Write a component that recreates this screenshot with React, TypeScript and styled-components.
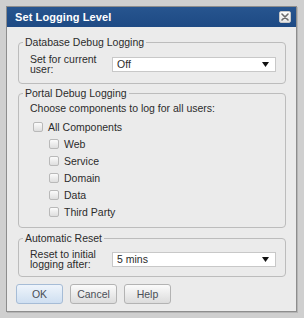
import React from 'react';
import styled, { createGlobalStyle } from 'styled-components';

const GlobalStyle = createGlobalStyle`
	html, body {
		margin: 0;
		padding: 0;
		background: #cfcfcf;
	}

	body {
		font-family: 'Liberation Sans', Arial, sans-serif;
		font-size: 10.5px;
		color: #2b2b2b;
	}
`;

const components = ['Web', 'Service', 'Domain', 'Data', 'Third Party'];

const Arrow = (): React.FunctionComponentElement<JSX.Element> => (
	<svg width='7' height='5' viewBox='0 0 7 5'>
		<path d='M0 0 L7 0 L3.5 5 Z' fill='#111' />
	</svg>
);

const CloseIcon = (): React.FunctionComponentElement<JSX.Element> => (
	<svg width='8' height='8' viewBox='0 0 8 8'>
		<path d='M1 1 L7 7 M7 1 L1 7' stroke='#6d6d6d' strokeWidth='1.6' strokeLinecap='round' />
	</svg>
);

const App = (): React.FunctionComponentElement<JSX.Element> => {
	return (
		<>
			<GlobalStyle />
			<Screen>
				<Window>
					<TitleBar>
						<h1>Set Logging Level</h1>
						<CloseButton>
							<CloseIcon />
						</CloseButton>
					</TitleBar>
					<Body>
						<Group $gap={0}>
							<legend>Database Debug Logging</legend>
							<GroupContent $top={6} $bottom={9}>
								<FieldRow>
									<FieldLabel>Set for current user:</FieldLabel>
									<Select>
										<span>Off</span>
										<Arrow />
									</Select>
								</FieldRow>
							</GroupContent>
						</Group>
						<Group $gap={3}>
							<legend>Portal Debug Logging</legend>
							<GroupContent $top={3} $bottom={7}>
								<Intro>Choose components to log for all users:</Intro>
								<CheckList>
									<CheckRow $indent={3}>
										<Box />
										<span>All Components</span>
									</CheckRow>
									{components.map((c) => (
										<CheckRow key={c} $indent={19}>
											<Box />
											<span>{c}</span>
										</CheckRow>
									))}
								</CheckList>
							</GroupContent>
						</Group>
						<Group $gap={4}>
							<legend>Automatic Reset</legend>
							<GroupContent $top={5} $bottom={7}>
								<FieldRow>
									<FieldLabel>Reset to initial logging after:</FieldLabel>
									<Select>
										<span>5 mins</span>
										<Arrow />
									</Select>
								</FieldRow>
							</GroupContent>
						</Group>
						<Buttons>
							<Button $primary>OK</Button>
							<Button>Cancel</Button>
							<Button>Help</Button>
						</Buttons>
					</Body>
				</Window>
			</Screen>
		</>
	);
};

const Screen = styled.div`
	width: 304px;
	height: 318px;
	padding: 6px 0 0 6px;
	box-sizing: border-box;
	overflow: hidden;
`;

const Window = styled.div`
	width: 291px;
	height: 306px;
	box-sizing: border-box;
	border: 1px solid #8d8d8d;
	background: #ebebeb;
	box-shadow: 1px 1px 0 #b5b5b5;
	display: flex;
	flex-direction: column;
`;

const TitleBar = styled.div`
	height: 20px;
	flex: none;
	background: linear-gradient(180deg, #27558f 0%, #1e4a84 100%);
	display: flex;
	align-items: center;
	justify-content: space-between;
	padding: 0 5px 0 8px;

	h1 {
		margin: 0;
		font-family: 'Liberation Sans', Arial, sans-serif;
		font-size: 11px;
		font-weight: 700;
		color: #ffffff;
		letter-spacing: 0.1px;
	}
`;

const CloseButton = styled.div`
	width: 12px;
	height: 12px;
	box-sizing: border-box;
	background: linear-gradient(180deg, #ffffff 0%, #e6e6e6 100%);
	border: 1px solid #c9c9c9;
	border-radius: 2px;
	display: flex;
	align-items: center;
	justify-content: center;
`;

const Body = styled.div`
	padding: 9px 10px 0 11px;
	display: flex;
	flex-direction: column;
`;

const Group = styled.fieldset<{ $gap: number }>`
	margin: ${(p) => p.$gap}px 0 0;
	padding: 0;
	border: 1px solid #bcbcbc;
	border-radius: 4px;
	min-width: 0;

	legend {
		margin-left: 4px;
		padding: 0 2px;
		line-height: 12px;
		font-size: 10.5px;
		color: #2b2b2b;
	}
`;

const GroupContent = styled.div<{ $top: number; $bottom: number }>`
	padding: ${(p) => p.$top}px 9px ${(p) => p.$bottom}px 11px;
`;

const FieldRow = styled.div`
	display: flex;
	align-items: center;
`;

const FieldLabel = styled.div`
	width: 82px;
	flex: none;
	line-height: 10px;
	padding: 0 10px 0 0;
	box-sizing: border-box;
`;

const Select = styled.div`
	flex: 1;
	height: 15px;
	box-sizing: border-box;
	background: #ffffff;
	border: 1px solid #c8c8c8;
	display: flex;
	align-items: center;
	justify-content: space-between;
	padding: 0 6px 0 4px;
	line-height: 13px;
`;

const Intro = styled.div`
	line-height: 12px;
`;

const CheckList = styled.div`
	margin-top: 4px;
	display: flex;
	flex-direction: column;
`;

const CheckRow = styled.div<{ $indent: number }>`
	height: 17px;
	display: flex;
	align-items: center;
	gap: 5px;
	padding-left: ${(p) => p.$indent}px;
`;

const Box = styled.span`
	width: 10px;
	height: 10px;
	box-sizing: border-box;
	border: 1px solid #b9b9b9;
	border-radius: 2px;
	background: linear-gradient(180deg, #fbfbfb 0%, #dedede 100%);
`;

const Buttons = styled.div`
	margin: 7px 0 0 -2px;
	display: flex;
	gap: 7px;
`;

const Button = styled.div<{ $primary?: boolean }>`
	width: 47px;
	height: 20px;
	box-sizing: border-box;
	display: flex;
	align-items: center;
	justify-content: center;
	border-radius: 3px;
	border: 1px solid ${(p) => (p.$primary ? '#a6bcd6' : '#b3b3b3')};
	background: ${(p) =>
		p.$primary
			? 'linear-gradient(180deg, #eef4fb 0%, #cfdff1 100%)'
			: 'linear-gradient(180deg, #fbfbfb 0%, #dcdcdc 100%)'};
	color: #4a4f57;
	font-size: 10.5px;
`;

export default App;
